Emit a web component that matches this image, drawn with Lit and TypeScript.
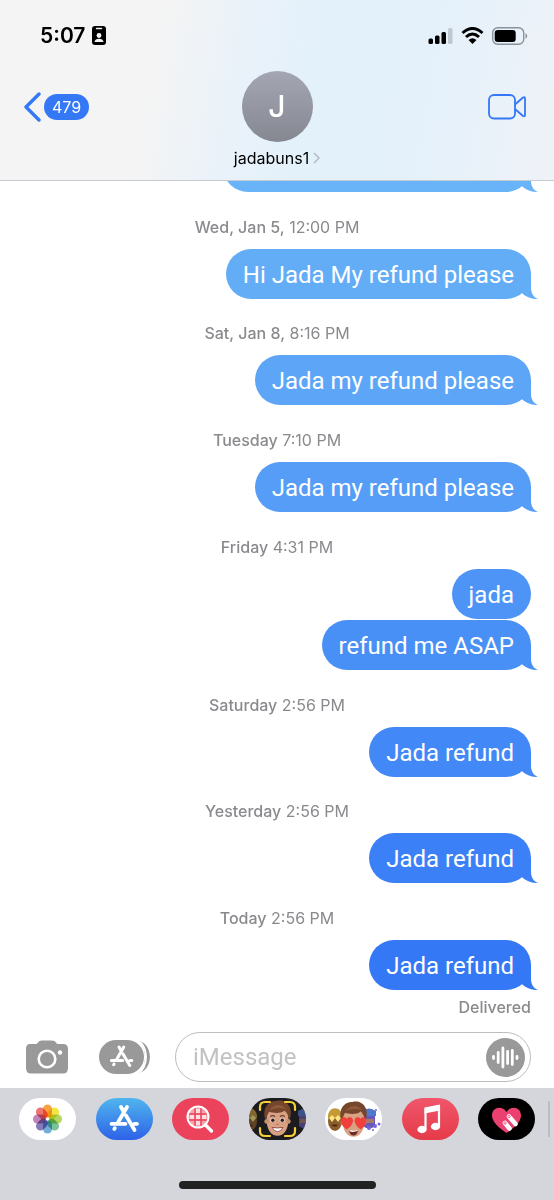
import { LitElement, html, css, svg } from "lit";
import { customElement, property } from "lit/decorators.js";
import { styleMap } from "lit/directives/style-map.js";

interface Message {
  text: string;
  tint: string;
  tail: boolean;
}

interface Group {
  day: string;
  time: string;
  messages: Message[];
}

const groups: Group[] = [
  { day: "Wed, Jan 5,", time: "12:00 PM", messages: [{ text: "Hi Jada My refund please", tint: "#63adf7", tail: true }] },
  { day: "Sat, Jan 8,", time: "8:16 PM", messages: [{ text: "Jada my refund please", tint: "#5ca5f7", tail: true }] },
  { day: "Tuesday", time: "7:10 PM", messages: [{ text: "Jada my refund please", tint: "#559df7", tail: true }] },
  {
    day: "Friday",
    time: "4:31 PM",
    messages: [
      { text: "jada", tint: "#4d94f6", tail: false },
      { text: "refund me ASAP", tint: "#4990f6", tail: true },
    ],
  },
  { day: "Saturday", time: "2:56 PM", messages: [{ text: "Jada refund", tint: "#4288f6", tail: true }] },
  { day: "Yesterday", time: "2:56 PM", messages: [{ text: "Jada refund", tint: "#3b80f6", tail: true }] },
  { day: "Today", time: "2:56 PM", messages: [{ text: "Jada refund", tint: "#3478f6", tail: true }] },
];

@customElement("chat-bubble")
export class ChatBubble extends LitElement {
  @property() text = "";
  @property() tint = "#3478f6";
  @property({ type: Boolean }) tail = false;

  static styles = css`
    :host {
      display: block;
    }
    .bubble {
      position: relative;
      box-sizing: border-box;
      min-width: 50px;
      min-height: 50px;
      padding: 11px 17px 9px;
      border-radius: 25px;
      color: #fff;
      font-family: Roboto, "Liberation Sans", sans-serif;
      font-size: 24px;
      line-height: 30px;
    }
    .tail {
      position: absolute;
      right: -8px;
      bottom: 0;
      width: 20px;
      height: 25px;
    }
  `;

  render() {
    return html`<div class="bubble" style=${styleMap({ background: this.tint })}>
      ${this.text}
      ${this.tail
        ? html`<svg class="tail" viewBox="0 0 20 25" aria-hidden="true">
            <path fill=${this.tint} d="M12 0V14C12 19 14.500 23.500 19 25C13 25.300 7 23 3 19.200L4 0Z" />
          </svg>`
        : ""}
    </div>`;
  }
}

const storeGlyph = svg`
  <path d="M12.500 4.500L15.300 9.500M18.500 4.500L9.500 20M17.500 13L26 27.500M3 21.300H17M26 21.300H28.500M5.800 26.500L6.300 25.700"
    fill="none" stroke="#fff" stroke-linecap="round" stroke-width="3.800" />`;

const face = svg`
  <path d="M-9 -3C-10 9 -5 14 0 14S10 9 9 -3C8 -10 -8 -10 -9 -3Z" fill="#d9a183" />
  <circle cx="-9" cy="2" r="2" fill="#cc8e6f" /><circle cx="9" cy="2" r="2" fill="#cc8e6f" />
  <path d="M-10 1C-13 -9 -8 -15 -1 -15C7 -17 14 -10 10 1C9 -3 8 -5 6 -7C2 -4 -4 -5 -7 -6C-8 -4 -9 -2 -10 1Z" fill="#75462b" />
  <path d="M-7 -7C-3 -13 4 -13 7 -8C2 -10 -3 -9 -7 -7Z" fill="#8d5938" />`;

const yellowFriend = svg`
  <ellipse cx="10" cy="23" rx="7" ry="10" fill="#8a5d2b" />
  <path d="M3 20C2 7 18 7 17 20Z" fill="#c49a37" />
  <path d="M4 20L7 17L10 20L7 24ZM10 20L13 17L16 20L13 24Z" fill="#ffe681" />
  <path d="M6 27Q10 30 13 27Q10 26 6 27Z" fill="#4a2514" />`;

const purpleFriend = svg`
  <path d="M38 14Q45 9 50 14V28Q44 33 38 28Z" fill="#6858b9" />
  <path d="M37 13Q44 8 51 13V18H37Z" fill="#5277cf" />
  <rect x="39" y="21" width="10" height="4" fill="#a57b68" />`;

const photosIcon = () => {
  const petals = ["#f6921e", "#f4df22", "#a8cf45", "#5fb887", "#5a9fd4", "#7165ad", "#b671ad", "#ed5b56"];
  return svg`<rect width="57" height="42" rx="21" fill="#fff" />
    ${petals.map(
      (fill, i) =>
        svg`<rect class="petal" x="24" y="6.500" width="9" height="13" rx="4.500" fill=${fill} transform="rotate(${i * 45} 28.500 21)" />`,
    )}`;
};

const trayApps = [
  { name: "Photos", art: photosIcon() },
  {
    name: "App Store",
    art: svg`<defs><linearGradient id="store" x2="0" y2="1"><stop stop-color="#50b5ee" /><stop offset="1" stop-color="#2d62e8" /></linearGradient></defs>
      <rect width="57" height="42" rx="21" fill="url(#store)" />
      <g transform="translate(12.500 4.500)">${storeGlyph}</g>`,
  },
  {
    name: "Images",
    art: svg`<rect width="57" height="42" rx="21" fill="#ea435b" />
      <circle cx="26" cy="19" r="10" fill="#f7a2ac" />
      <path d="M16 16H36M16 22H36M23 9V29M29 9V29" stroke="#ea435b" stroke-width="1.400" />
      <path d="M24 17h4v4h-4zM18 17h4v4h-4zM24 11h4v4h-4zM30 17h4v4h-4zM24 23h4v4h-4z" fill="#fff" opacity=".65" />
      <circle cx="26" cy="19" r="10.500" fill="none" stroke="#fff" stroke-width="2" />
      <path d="M33.500 27L39.500 33" stroke="#fff" stroke-width="3.400" stroke-linecap="round" />`,
  },
  {
    name: "Memoji",
    art: svg`<defs><clipPath id="pill"><rect width="57" height="42" rx="21" /></clipPath></defs>
      <g clip-path="url(#pill)">
        <rect width="57" height="42" fill="#1c1c1e" />
        <g opacity=".6"><g transform="translate(-9 0)">${yellowFriend}</g><g transform="translate(12 0)">${purpleFriend}</g></g>
        <g transform="translate(28.500 21) scale(1.200)">${face}
          <ellipse cx="-4" cy="1" rx="2" ry="1.600" fill="#fff" /><ellipse cx="4" cy="1" rx="2" ry="1.600" fill="#fff" />
          <circle cx="-3.900" cy="1.100" r="1.500" fill="#2e1d16" /><circle cx="4" cy="1.100" r="1.500" fill="#2e1d16" />
          <path d="M-6 -2Q-4 -3.500 -2 -2M2 -2Q4 -3.500 6 -2" fill="none" stroke="#68402c" />
          <path d="M-4.500 7Q0 8 4.500 7Q3 10.500 0 10.500T-4.500 7Z" fill="#fff" stroke="#8a3c32" stroke-width=".7" />
          <path d="M-1 4.500H1" stroke="#b97759" />
        </g>
        <path d="M11 12V9Q11 4 16 4H21M36 4H41Q46 4 46 9V12M11 30V33Q11 38 16 38H21M36 38H41Q46 38 46 33V30" fill="none" stroke="#f6ce36" stroke-width="2.200" stroke-linecap="round" />
      </g>`,
  },
  {
    name: "Memoji stickers",
    art: svg`<rect width="57" height="42" rx="21" fill="#fff" />
      ${yellowFriend}${purpleFriend}
      <g fill="#7466dd"><circle cx="51" cy="12" r="1" /><circle cx="50" cy="28" r="2" /><circle cx="54" cy="26" r="1.500" /><circle cx="44" cy="30" r="2" /><circle cx="48" cy="32" r="1" /></g>
      <g transform="translate(28.500 22) scale(1.200)">${face}
        <path d="M-5.500 8C-15 1 -9 -5 -5.500 -1C-2 -5 4 1 -5.500 8Z" fill="#f13f3b" />
        <path d="M6 8C-3 1 2 -5 6 -1C9 -5 15 1 6 8Z" fill="#f13f3b" />
        <path d="M-3.500 9Q0 10 4 8Q3 13 0 13T-3.500 9Z" fill="#6c2925" /><path d="M-3 9Q0 10 3.500 8.500" stroke="#fff" fill="none" />
      </g>`,
  },
  {
    name: "Music",
    art: svg`<defs><linearGradient id="music" x2="0" y2="1"><stop stop-color="#f0566b" /><stop offset="1" stop-color="#e53b49" /></linearGradient></defs>
      <rect width="57" height="42" rx="21" fill="url(#music)" />
      <path d="M23.500 31V11L37 8V28" fill="none" stroke="#fff" stroke-width="2.200" stroke-linejoin="round" />
      <path d="M22.500 9.500L38 6.500V12.500L22.500 15.500Z" fill="#fff" />
      <ellipse cx="20" cy="31.500" rx="4.600" ry="3.700" fill="#fff" /><ellipse cx="33.500" cy="28.500" rx="4.600" ry="3.700" fill="#fff" />`,
  },
  {
    name: "Digital Touch",
    art: svg`<rect width="57" height="42" rx="21" fill="#000" />
      <path d="M28.500 35C21 30 14 24 14 17.500C14 9 24 7 28.500 14C33 7 43 9 43 17.500C43 24 36 30 28.500 35Z" fill="#ec4071" />
      <path d="M31 18.500L37.500 26M27 25L31.500 30.500" stroke="#fff" stroke-width="4.600" stroke-linecap="round" />
      <circle cx="31" cy="18.500" r="1.200" fill="none" stroke="#ec4071" stroke-width=".8" /><circle cx="27" cy="25" r="1.200" fill="none" stroke="#ec4071" stroke-width=".8" />`,
  },
];

@customElement("app-root")
export class AppRoot extends LitElement {
  static styles = css`
    :host {
      display: flex;
      flex-direction: column;
      min-height: 100vh;
      background: #fff;
      color: #000;
      font-family: Inter, "Liberation Sans", sans-serif;
    }
    svg {
      display: block;
    }
    button {
      display: block;
      padding: 0;
      border: 0;
      background: none;
      font: inherit;
      color: inherit;
    }
    .header {
      border-bottom: 1px solid #c6cbd1;
      background: linear-gradient(100deg, #f4f4f4 0, #f4f4f4 28%, #eaf2f9 42%, #e3f1fb 56%, #e4f1fb 75%, #eff2f7 100%);
    }
    .status {
      display: flex;
      align-items: center;
      justify-content: space-between;
      height: 71px;
      padding: 0 26px 0 40px;
      box-sizing: border-box;
    }
    .clock,
    .signals {
      display: flex;
      align-items: center;
    }
    .clock {
      gap: 7px;
      font-size: 21px;
      font-weight: 600;
    }
    .signals {
      gap: 8px;
    }
    .nav {
      display: grid;
      grid-template-columns: 1fr auto 1fr;
      padding: 0 24px 12px;
    }
    .back,
    .video {
      height: 71px;
    }
    .back {
      display: flex;
      align-items: center;
      gap: 3px;
      justify-self: start;
    }
    .count {
      padding: 0 8px;
      border-radius: 13px;
      background: #3478f6;
      color: #fff;
      font-size: 16px;
      line-height: 26px;
    }
    .video {
      justify-self: end;
      margin-right: 4px;
    }
    .contact {
      display: flex;
      flex-direction: column;
      align-items: center;
      gap: 6px;
    }
    .avatar {
      width: 71px;
      border-radius: 50%;
      background: linear-gradient(#a4a7b3, #858791);
      color: #fff;
      font-size: 30px;
      font-weight: 500;
      line-height: 71px;
      text-align: center;
    }
    .name {
      display: flex;
      align-items: center;
      gap: 4px;
      font-size: 16px;
      line-height: 20px;
    }
    .thread {
      display: flex;
      flex: 1;
      flex-direction: column;
      justify-content: space-between;
      overflow: hidden;
      padding: 0 23px;
    }
    .earlier {
      align-self: flex-end;
      width: 308px;
      margin-top: -39px;
    }
    .group {
      display: flex;
      flex-direction: column;
      align-items: flex-end;
      gap: 1px;
    }
    .stamp {
      align-self: center;
      margin-bottom: 12px;
      color: #8a8a8e;
      font-size: 16px;
      line-height: 18px;
    }
    .day {
      font-weight: 500;
    }
    .receipt {
      margin-top: 7px;
      color: #8a8a8e;
      font-size: 16px;
      font-weight: 500;
      line-height: 18px;
    }
    .composer {
      display: flex;
      align-items: center;
      padding: 16px 23px 6px 25px;
    }
    .apps {
      margin: 0 24px 0 29px;
    }
    .field {
      display: flex;
      flex: 1;
      align-items: center;
      box-sizing: border-box;
      min-width: 0;
      height: 50px;
      padding: 0 5px 0 17px;
      border: 1px solid #bdbdc0;
      border-radius: 25px;
    }
    .entry {
      flex: 1;
      min-width: 0;
      padding: 0;
      border: 0;
      outline: 0;
      background: none;
      font-family: Roboto, "Liberation Sans", sans-serif;
      font-size: 24px;
    }
    .entry::placeholder {
      color: #c2c2c5;
      opacity: 1;
    }
    .tray {
      height: 112px;
      box-sizing: border-box;
      display: flex;
      flex-direction: column;
      align-items: center;
      justify-content: space-between;
      padding: 10px 0 11px;
      background: #d4d6dc;
    }
    .strip {
      display: flex;
      align-items: center;
      align-self: stretch;
      gap: 13px;
      padding: 0 4px 0 19px;
    }
    .icons {
      display: flex;
      flex: 1;
      justify-content: space-between;
    }
    .divider {
      width: 2px;
      height: 36px;
      background: #bcbec4;
    }
    .petal {
      mix-blend-mode: multiply;
      opacity: 0.85;
    }
    .home {
      width: 197px;
      height: 8px;
      border-radius: 4px;
      background: #222;
    }
  `;

  private renderStatus() {
    return html`<div class="status">
      <div class="clock">
        <span>5:07</span>
        <svg width="14" height="19" viewBox="0 0 14 19" aria-hidden="true">
          <rect width="14" height="19" rx="3" />
          <path d="M4.500 2.500H9.500" stroke="#f4f4f4" stroke-width="1.400" stroke-linecap="round" />
          <circle cx="7" cy="9.500" r="2.400" fill="#f4f4f4" />
          <path d="M2.500 16C2.500 11.500 11.500 11.500 11.500 16Z" fill="#f4f4f4" />
        </svg>
      </div>
      <div class="signals">
        <svg width="25" height="17" viewBox="0 0 25 17" aria-hidden="true">
          <rect x=".5" y="11.500" width="4.500" height="5.500" rx="1.500" />
          <rect x="7" y="8.500" width="4.500" height="8.500" rx="1.500" />
          <rect x="13.500" y="5" width="4.500" height="12" rx="1.500" />
          <rect x="20" y="1" width="4.500" height="16" rx="1.500" fill="#bfc8d0" />
        </svg>
        <svg width="23" height="17" viewBox="0 0 23 17" aria-hidden="true">
          <path d="M1.500 6Q11.500 -3 21.500 6M5 10Q11.500 4 18 10" fill="none" stroke="#000" stroke-width="3" />
          <path d="M7.500 13Q11.500 9.500 15.500 13L11.500 17Z" />
        </svg>
        <svg width="36" height="18" viewBox="0 0 36 18" aria-hidden="true">
          <rect x=".7" y=".7" width="31" height="16.600" rx="5" fill="none" stroke="#8b9297" stroke-width="1.400" />
          <rect x="2.700" y="3" width="21" height="12" rx="3" />
          <path d="M33.500 6Q37 9 33.500 12Z" fill="#8b9297" />
        </svg>
      </div>
    </div>`;
  }

  render() {
    return html`
      <header class="header">
        ${this.renderStatus()}
        <div class="nav">
          <button class="back" aria-label="Back, 479 unread">
            <svg width="17" height="30" viewBox="0 0 17 30">
              <path d="M15 2L2 15L15 28" fill="none" stroke="#3478f6" stroke-width="3.400" stroke-linecap="round" stroke-linejoin="round" />
            </svg>
            <span class="count">479</span>
          </button>
          <div class="contact">
            <div class="avatar">J</div>
            <button class="name">
              jadabuns1
              <svg width="7" height="12" viewBox="0 0 7 12"><path d="M1 1L6 6L1 11" fill="none" stroke="#b4bac1" stroke-width="1.500" /></svg>
            </button>
          </div>
          <button class="video" aria-label="Video call">
            <svg width="38" height="26" viewBox="0 0 38 26" fill="none" stroke="#3478f6" stroke-width="1.800" stroke-linejoin="round">
              <rect x="1" y="1" width="26" height="23.500" rx="5" />
              <path d="M27 10.500L35 3.500Q37 2.500 37 4.500V21Q37 23 35 22L27 15" />
            </svg>
          </button>
        </div>
      </header>

      <main class="thread">
        <chat-bubble class="earlier" tint="#69b4f8" tail></chat-bubble>
        ${groups.map(
          (group, i) => html`<section class="group">
            <div class="stamp"><span class="day">${group.day}</span> ${group.time}</div>
            ${group.messages.map((m) => html`<chat-bubble .text=${m.text} .tint=${m.tint} .tail=${m.tail}></chat-bubble>`)}
            ${i === groups.length - 1 ? html`<div class="receipt">Delivered</div>` : ""}
          </section>`,
        )}
      </main>

      <form class="composer" @submit=${(e: Event) => e.preventDefault()}>
        <button type="button" aria-label="Camera">
          <svg width="44" height="34" viewBox="0 0 44 34">
            <path d="M5 4H11C13 4 13 0.500 17 0.500H27C31 0.500 31 4 33 4H38Q43 4 43 9V28Q43 33.500 38 33.500H6Q1 33.500 1 28V9Q1 4 5 4Z" fill="#999" />
            <circle cx="22" cy="19" r="8.300" fill="none" stroke="#fff" stroke-width="2.600" />
            <circle cx="35" cy="12.500" r="2.200" fill="#fff" />
          </svg>
        </button>
        <button class="apps" type="button" aria-label="Apps">
          <svg width="53" height="34" viewBox="0 0 53 34">
            <rect x="1" width="45" height="34" rx="17" fill="#999" />
            <path d="M41 1C55 4 56 29 41 33C49 26 49 8 41 1Z" fill="#999" />
            <path d="M39 0C51 6 51 28 39 34" fill="none" stroke="#fff" stroke-width="2" />
            <g transform="translate(11 3.500) scale(.8)">${storeGlyph}</g>
          </svg>
        </button>
        <div class="field">
          <input class="entry" type="text" placeholder="iMessage" aria-label="iMessage" />
          <button type="button" aria-label="Record audio">
            <svg width="39" height="39" viewBox="0 0 39 39">
              <circle cx="19.500" cy="19.500" r="19.500" fill="#999" />
              <path d="M7.500 18.500V20.500M12.200 14.500V24.500M16.900 10V29M21.600 13.500V25.500M26.300 12.500V26.500M31 18.500V20.500" stroke="#fff" stroke-width="2.800" stroke-linecap="round" />
            </svg>
          </button>
        </div>
      </form>

      <footer class="tray">
        <div class="strip">
          <nav class="icons" aria-label="iMessage apps">
            ${trayApps.map(
              (app) => html`<button aria-label=${app.name}><svg width="57" height="42" viewBox="0 0 57 42">${app.art}</svg></button>`,
            )}
          </nav>
          <div class="divider"></div>
        </div>
        <div class="home"></div>
      </footer>
    `;
  }
}
